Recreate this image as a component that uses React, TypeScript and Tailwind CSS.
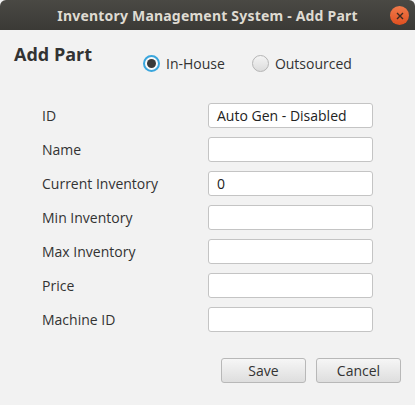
import React from "react";

const fields = [
  { label: "ID", value: "Auto Gen - Disabled" },
  { label: "Name", value: "" },
  { label: "Current Inventory", value: "0" },
  { label: "Min Inventory", value: "" },
  { label: "Max Inventory", value: "" },
  { label: "Price", value: "" },
  { label: "Machine ID", value: "" },
];

const Radio = ({ checked, label }: { checked?: boolean; label: string }) => (
  <div className="flex items-center gap-[6px]">
    {checked ? (
      <div className="w-[17px] h-[17px] rounded-full border-2 border-[#3aa6dd] bg-[#fafafa] flex items-center justify-center">
        <div className="w-[9px] h-[9px] rounded-full bg-[#3a3a3a]" />
      </div>
    ) : (
      <div className="w-[17px] h-[17px] rounded-full border border-[#b5b5b5] bg-gradient-to-b from-[#f4f4f4] to-[#dcdcdc]" />
    )}
    <span className="text-[14px] text-[#333]">{label}</span>
  </div>
);

export default function App() {
  return (
    <div
      className="w-[415px] h-[405px] bg-[#f2f2f2] flex flex-col"
      style={{ fontFamily: '"Open Sans", "Noto Sans", sans-serif' }}
    >
      <div className="h-[30px] shrink-0 rounded-t-[6px] bg-gradient-to-b from-[#4a4944] to-[#3b3a36] flex items-center relative">
        <span
          className="flex-1 text-center text-[14px] font-bold text-[#dfdbd2] tracking-[0.2px]"
          style={{ fontFamily: '"Noto Sans", sans-serif' }}
        >
          Inventory Management System - Add Part
        </span>
        <div className="absolute right-[6px] top-[6px] w-[19px] h-[19px] rounded-full bg-gradient-to-b from-[#f07a4a] to-[#df4f1f] flex items-center justify-center">
          <svg width="8" height="8" viewBox="0 0 8 8">
            <path d="M1 1L7 7M7 1L1 7" stroke="#3a2a20" strokeWidth="1.4" />
          </svg>
        </div>
      </div>

      <div className="flex items-start pl-[14px] pt-[12px]">
        <span className="text-[18px] leading-[24px] font-bold text-[#333] w-[129px]">Add Part</span>
        <div className="flex gap-[27px] mt-[11px]">
          <Radio checked label="In-House" />
          <Radio label="Outsourced" />
        </div>
      </div>

      <div className="flex flex-col gap-[9px] mt-[29px] pl-[42px]">
        {fields.map((f) => (
          <div key={f.label} className="flex items-center h-[25px]">
            <span className="w-[166px] text-[14px] text-[#333]">{f.label}</span>
            <div className="w-[165px] h-[25px] rounded-[3px] border border-[#c4c4c4] bg-white px-[8px] flex items-center text-[14px] text-[#222]">
              {f.value}
            </div>
          </div>
        ))}
      </div>

      <div className="flex justify-end gap-[10px] pr-[14px] mt-[26px]">
        {["Save", "Cancel"].map((b) => (
          <div
            key={b}
            className="w-[85px] h-[25px] rounded-[3px] border border-[#b8b8b8] bg-gradient-to-b from-[#f6f6f6] to-[#dedede] flex items-center justify-center text-[14px] text-[#333]"
          >
            {b}
          </div>
        ))}
      </div>
    </div>
  );
}
